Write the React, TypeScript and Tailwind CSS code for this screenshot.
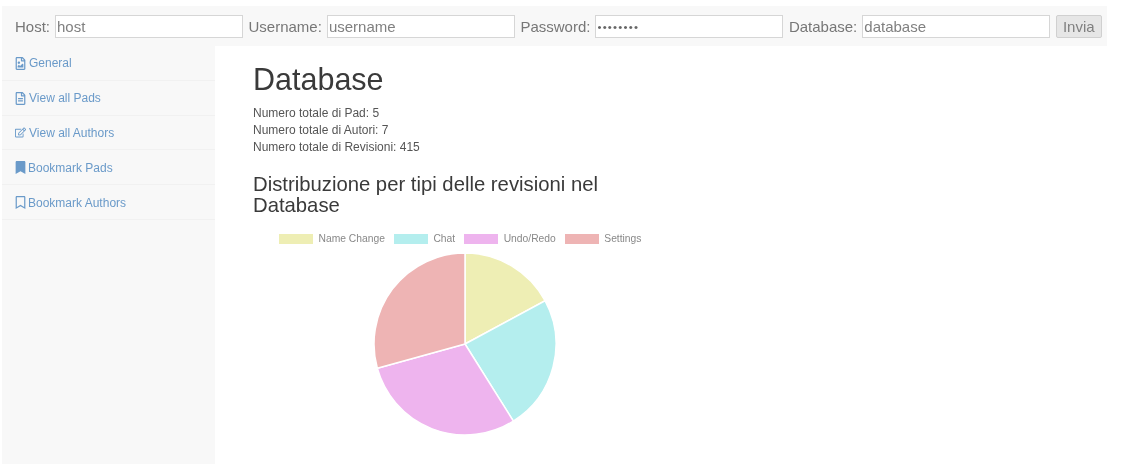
import { FaBookmark, FaRegBookmark, FaRegEdit, FaRegFileAlt, FaRegFileImage } from "react-icons/fa";

const navItems = [
  { label: "General", Icon: FaRegFileImage, gap: "gap-[3px]" },
  { label: "View all Pads", Icon: FaRegFileAlt, gap: "gap-[3px]" },
  { label: "View all Authors", Icon: FaRegEdit, gap: "gap-[3px]" },
  { label: "Bookmark Pads", Icon: FaBookmark, gap: "gap-[2px]" },
  { label: "Bookmark Authors", Icon: FaRegBookmark, gap: "gap-[2px]" },
];

const legend = [
  { label: "Name Change", swatch: "bg-[#eeeeb4]" },
  { label: "Chat", swatch: "bg-[#b4eeee]" },
  { label: "Undo/Redo", swatch: "bg-[#eeb4ee]" },
  { label: "Settings", swatch: "bg-[#eeb4b4]" },
];

const slices = [
  { from: 0, to: 61.6, fill: "#eeeeb4" },
  { from: 61.6, to: 147.9, fill: "#b4eeee" },
  { from: 147.9, to: 254.5, fill: "#eeb4ee" },
  { from: 254.5, to: 360, fill: "#eeb4b4" },
];

function slicePath(from: number, to: number) {
  const c = 92;
  const r = 91;
  const point = (deg: number) => {
    const a = (deg * Math.PI) / 180;
    return `${c + r * Math.sin(a)} ${c - r * Math.cos(a)}`;
  };
  const large = to - from > 180 ? 1 : 0;
  return `M${c} ${c}L${point(from)}A${r} ${r} 0 ${large} 1 ${point(to)}Z`;
}

function Field({ label, type = "text", value }: { label: string; type?: string; value: string }) {
  const size =
    type === "password"
      ? "text-[11.5px] tracking-[1.2px] text-[#666]"
      : "text-[15px] text-[#808080]";
  return (
    <label className="flex items-center gap-[5px]">
      <span className="pt-[2px]">{label}</span>
      <input
        type={type}
        readOnly
        value={value}
        className={`w-[188px] h-[23px] bg-white border border-[#d6d6d6] px-[1px] outline-none ${size}`}
      />
    </label>
  );
}

export default function App() {
  return (
    <div
      className="w-[1128px] h-[476px] overflow-hidden bg-white pt-[6px] pl-[2px] blur-[0.5px]"
      style={{ fontFamily: '"Liberation Sans", Arial, sans-serif' }}
    >
      <div className="w-[1105px]">
        {/* Connection form */}
        <div className="h-[40px] bg-[#f8f8f8] flex items-center gap-[5.5px] pl-[13px] pt-[1px] text-[15px] text-[#777]">
          <Field label="Host:" value="host" />
          <Field label="Username:" value="username" />
          <Field label="Password:" type="password" value="database" />
          <Field label="Database:" value="database" />
          <button className="w-[46px] h-[23px] bg-[#e6e6e6] border border-[#d0d0d0] rounded-[2px] text-[15px] text-[#808080]">
            Invia
          </button>
        </div>

        <div className="flex h-[418px]">
          {/* Sidebar */}
          <nav className="w-[213px] shrink-0 bg-[#f8f8f8]">
            {navItems.map(({ label, Icon, gap }) => (
              <div
                key={label}
                className={`h-[34.8px] flex items-center pl-[13px] pt-[1px] border-b border-[#f1f1f1] text-[12px] text-[#6a9ac9] ${gap}`}
              >
                <Icon className="w-[11px] h-[13px]" />
                <span>{label}</span>
              </div>
            ))}
          </nav>

          {/* Main */}
          <main className="pl-[38px] text-[#3a3a3a]">
            <h1 className="text-[30.5px] leading-[33px] mt-[17px]">Database</h1>
            <div className="mt-[9px] text-[12px] leading-[17px] text-[#555]">
              <p>Numero totale di Pad: 5</p>
              <p>Numero totale di Autori: 7</p>
              <p>Numero totale di Revisioni: 415</p>
            </div>
            <h3 className="w-[370px] mt-[18px] text-[20.3px] leading-[21px]">
              Distribuzione per tipi delle revisioni nel Database
            </h3>
            <div className="mt-[15px] ml-[26px] flex items-center text-[10.3px] text-[#888]">
              {legend.map((item) => (
                <div key={item.label} className="flex items-center gap-[5.5px] mr-[9px]">
                  <span className={`w-[34px] h-[10px] ${item.swatch}`} />
                  <span>{item.label}</span>
                </div>
              ))}
            </div>
            <svg width="184" height="184" viewBox="0 0 184 184" className="mt-[6px] ml-[119.5px]">
              {slices.map((s) => (
                <path key={s.fill} d={slicePath(s.from, s.to)} fill={s.fill} stroke="#fff" strokeWidth="1.5" />
              ))}
            </svg>
          </main>
        </div>
      </div>
    </div>
  );
}
